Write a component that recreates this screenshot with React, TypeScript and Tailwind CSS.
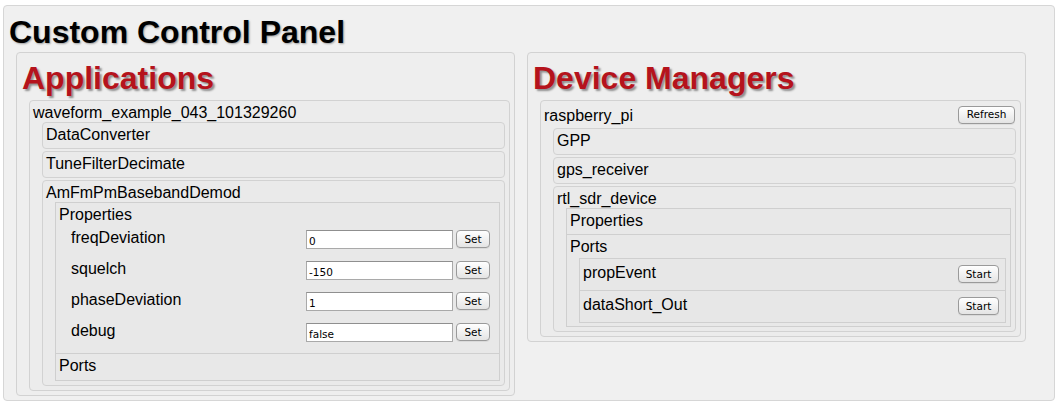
import React from "react";

const SANS = "font-['Liberation_Sans',Arial,Helvetica,sans-serif]";
const UI = "font-['DejaVu_Sans','Liberation_Sans',sans-serif]";

function Btn({ label, w }: { label: string; w: string }) {
  return (
    <button
      className={`${UI} ${w} block h-[18px] shrink-0 rounded-[4px] border border-[#9a9a9a] bg-linear-to-b from-white to-[#e4e4e4] text-[10.5px] leading-none text-black shadow-[0_1px_0_rgba(0,0,0,0.06)]`}
    >
      {label}
    </button>
  );
}

function Title({ children, h = "h-[21px]" }: { children: React.ReactNode; h?: string }) {
  return <div className={`${h} pl-[3px] text-[16px] leading-[23px] text-black`}>{children}</div>;
}

function RBox({
  title,
  bg,
  children,
}: {
  title?: React.ReactNode;
  bg: string;
  children?: React.ReactNode;
}) {
  return (
    <div className={`rounded-[4px] border border-[#d2d2d2] ${bg} pb-[4px]`}>
      {title}
      {children}
    </div>
  );
}

function Nest({ children, gap = true, mt = "" }: { children: React.ReactNode; gap?: boolean; mt?: string }) {
  return <div className={`ml-[12px] mr-[4px] flex flex-col ${gap ? "gap-[2px]" : ""} ${mt}`}>{children}</div>;
}

function PropRow({ label, value }: { label: string; value: string }) {
  return (
    <div className="flex h-[31px] items-start pl-[3px] pr-[5px]">
      <div className="flex-1 pt-[3px] text-[16px] leading-[21px] text-black">{label}</div>
      <input
        readOnly
        defaultValue={value}
        className={`${UI} mt-[6px] block h-[19px] w-[147px] border border-[#a9a9a9] border-t-[#8f8f8f] bg-white pl-[2px] pt-[2px] text-[10.5px] leading-none text-black outline-none`}
      />
      <div className="ml-[3px] mt-[6px] flex">
        <Btn label="Set" w="w-[34px]" />
      </div>
    </div>
  );
}

function PortRow({ label }: { label: string }) {
  return (
    <div className="flex h-[31px] items-start justify-between pl-[3px] pr-[6px]">
      <div className="pt-[3px] text-[16px] leading-[21px] text-black">{label}</div>
      <div className="mt-[6px] flex">
        <Btn label="Start" w="w-[41px]" />
      </div>
    </div>
  );
}

function Heading({ children }: { children: React.ReactNode }) {
  return (
    <div className="pl-[5px] pt-[7px] text-[32px] font-bold leading-[36px] text-[#b5131c] [text-shadow:2px_2px_2px_rgba(0,0,0,0.4)]">
      {children}
    </div>
  );
}

export default function App() {
  return (
    <div className={`${SANS} min-h-[405px] bg-white pl-[3px] pt-[5px]`}>
      <div className="w-[1052px] rounded-[4px] border border-[#d6d6d6] bg-[#f0f0f0] pb-[4px]">
        <div className="pl-[5px] pt-[8px] text-[32px] font-bold leading-[36px] text-black [text-shadow:1px_1px_2px_rgba(0,0,0,0.35)]">
          Custom Control Panel
        </div>
        <div className="ml-[12px] mt-[2px] flex items-start gap-[12px]">
          {/* Applications */}
          <div className="w-[499px] rounded-[4px] border border-[#d2d2d2] bg-[#eeeeee] pb-[4px]">
            <Heading>Applications</Heading>
            <Nest mt="mt-[4px]">
              <RBox bg="bg-[#ececec]" title={<Title>waveform_example_043_101329260</Title>}>
                <Nest>
                  <RBox bg="bg-[#eaeaea]" title={<Title>DataConverter</Title>} />
                  <RBox bg="bg-[#eaeaea]" title={<Title>TuneFilterDecimate</Title>} />
                  <RBox bg="bg-[#eaeaea]" title={<Title>AmFmPmBasebandDemod</Title>}>
                    <Nest gap={false}>
                      <div className="border border-[#cfcfcf] bg-[#e8e8e8] pb-[5px]">
                        <Title>Properties</Title>
                        <div className="ml-[12px] mr-[4px]">
                          <PropRow label="freqDeviation" value="0" />
                          <PropRow label="squelch" value="-150" />
                          <PropRow label="phaseDeviation" value="1" />
                          <PropRow label="debug" value="false" />
                        </div>
                      </div>
                      <div className="-mt-px border border-[#cfcfcf] bg-[#e8e8e8] pb-[4px]">
                        <Title h="h-[22px]">Ports</Title>
                      </div>
                    </Nest>
                  </RBox>
                </Nest>
              </RBox>
            </Nest>
          </div>

          {/* Device Managers */}
          <div className="w-[499px] rounded-[4px] border border-[#d2d2d2] bg-[#eeeeee] pb-[4px]">
            <Heading>Device Managers</Heading>
            <Nest mt="mt-[4px]">
              <RBox
                bg="bg-[#ececec]"
                title={
                  <div className="flex h-[27px] items-center justify-between pl-[3px] pr-[5px]">
                    <span className="pt-[2px] text-[16px] leading-[21px] text-black">raspberry_pi</span>
                    <Btn label="Refresh" w="w-[57px]" />
                  </div>
                }
              >
                <Nest>
                  <RBox bg="bg-[#eaeaea]" title={<Title>GPP</Title>} />
                  <RBox bg="bg-[#eaeaea]" title={<Title>gps_receiver</Title>} />
                  <RBox bg="bg-[#eaeaea]" title={<Title>rtl_sdr_device</Title>}>
                    <Nest gap={false}>
                      <div className="border border-[#cfcfcf] bg-[#e8e8e8] pb-[4px]">
                        <Title>Properties</Title>
                      </div>
                      <div className="-mt-px border border-[#cfcfcf] bg-[#e8e8e8] pb-[3px]">
                        <Title h="h-[23px]">Ports</Title>
                        <div className="ml-[12px] mr-[4px] flex flex-col">
                          <div className="border border-[#cfcfcf] bg-[#e7e7e7]">
                            <PortRow label="propEvent" />
                          </div>
                          <div className="-mt-px border border-[#cfcfcf] bg-[#e7e7e7]">
                            <PortRow label="dataShort_Out" />
                          </div>
                        </div>
                      </div>
                    </Nest>
                  </RBox>
                </Nest>
              </RBox>
            </Nest>
          </div>
        </div>
      </div>
    </div>
  );
}
